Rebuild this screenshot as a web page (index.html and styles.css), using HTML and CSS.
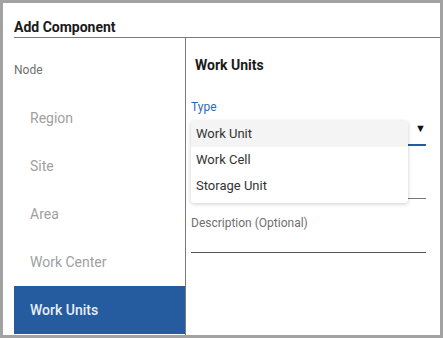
FILE: index.html
```html
<!DOCTYPE html>
<html>
<head>
<meta charset="utf-8">
<link rel="stylesheet" href="styles.css">
</head>
<body>
<div class="dialog">
  <div class="header">Add Component</div>
  <div class="content">
    <div class="nav">
      <div class="nav-label">Node</div>
      <div class="nav-item">Region</div>
      <div class="nav-item">Site</div>
      <div class="nav-item">Area</div>
      <div class="nav-item">Work Center</div>
      <div class="nav-item active">Work Units</div>
    </div>
    <div class="main">
      <div class="title">Work Units</div>
      <div class="field type-field">
        <div class="label blue">Type</div>
        <div class="select">
          <span class="arrow">&#9660;</span>
        </div>
        <div class="menu">
          <div class="option selected">Work Unit</div>
          <div class="option">Work Cell</div>
          <div class="option">Storage Unit</div>
        </div>
      </div>
      <div class="field name-field">
        <div class="line"></div>
      </div>
      <div class="field desc-field">
        <div class="label">Description (Optional)</div>
        <div class="line dark"></div>
      </div>
    </div>
  </div>
</div>
</body>
</html>
```

FILE: styles.css
```css
* { box-sizing: border-box; }
html, body {
  margin: 0;
  padding: 0;
  background: #a2a2a2;
  font-family: Roboto, "Liberation Sans", sans-serif;
}
.dialog {
  margin: 3px;
  width: 437px;
  height: 332px;
  background: #fff;
  display: flex;
  flex-direction: column;
  overflow: hidden;
}
.header {
  margin-left: 11px;
  height: 35px;
  padding-top: 16px;
  font-size: 14px;
  font-weight: 700;
  color: #1a1a1a;
  border-bottom: 1px solid #7a7a7a;
  line-height: 16px;
}
.content {
  flex: 1;
  display: flex;
  min-height: 0;
}
.nav {
  margin-left: 11px;
  width: 172px;
  border-right: 1px solid #7a7a7a;
  display: flex;
  flex-direction: column;
}
.nav-label {
  height: 56px;
  padding-top: 25px;
  font-size: 12px;
  line-height: 14px;
  color: #707070;
}
.nav-item {
  height: 48px;
  line-height: 48px;
  padding-left: 16px;
  font-size: 14px;
  color: #a0a0a0;
}
.nav-item.active {
  background: #245c9f;
  color: #e8eef6;
  font-weight: 500;
}
.main {
  flex: 1;
  padding-left: 5px;
  padding-right: 14px;
  position: relative;
}
.title {
  padding-left: 4px;
  padding-top: 19px;
  height: 62px;
  font-size: 14px;
  font-weight: 700;
  color: #1a1a1a;
  line-height: 16px;
}
.field { position: relative; }
.label {
  font-size: 12px;
  line-height: 14px;
  color: #707070;
}
.label.blue { color: #2e6bb8; }
.select {
  height: 32px;
  border-bottom: 2px solid #245c9f;
  position: relative;
}
.arrow {
  position: absolute;
  right: 0;
  top: 8px;
  font-size: 11px;
  color: #111;
}
.menu {
  position: absolute;
  left: 0;
  top: 21px;
  width: 217px;
  background: #fff;
  border-radius: 3px;
  box-shadow: 0 1px 4px rgba(0,0,0,0.2);
  padding-bottom: 4px;
  z-index: 2;
}
.option {
  height: 26px;
  line-height: 26px;
  padding-left: 5px;
  font-size: 13px;
  color: #333;
}
.option.selected { background: #f4f4f4; }
.name-field {
  height: 54px;
}
.line {
  height: 1px;
  background: #777;
}
.name-field .line { margin-top: 52px; }
.desc-field .label { margin-top: -36px; }
.desc-field .line { margin-top: 22px; background: #555; }
```
